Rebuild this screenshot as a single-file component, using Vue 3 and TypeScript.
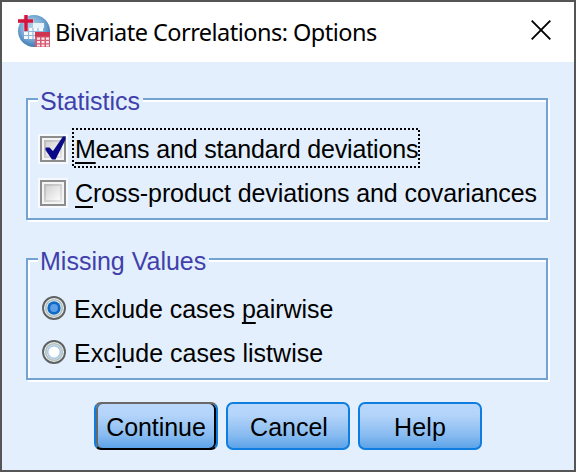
<script setup lang="ts">
import { ref } from 'vue'

interface Option {
  id: string
  before: string
  key: string
  after: string
}

const statistics: Option[] = [
  { id: 'means', before: '', key: 'M', after: 'eans and standard deviations' },
  { id: 'cross', before: '', key: 'C', after: 'ross-product deviations and covariances' },
]
const missing: Option[] = [
  { id: 'pairwise', before: 'Exclude cases ', key: 'p', after: 'airwise' },
  { id: 'listwise', before: 'Exc', key: 'l', after: 'ude cases listwise' },
]
const buttons: string[] = ['Continue', 'Cancel', 'Help']

const checked = ref<string[]>(['means'])
const focused = ref('means')
const selected = ref('pairwise')

function toggle(id: string) {
  focused.value = id
  checked.value = checked.value.includes(id)
    ? checked.value.filter((c) => c !== id)
    : [...checked.value, id]
}
</script>

<template>
  <div class="dialog">
    <header class="titlebar">
      <svg class="app-icon" width="32" height="32" viewBox="0 0 32 32">
        <defs>
          <radialGradient id="globe" cx="0.45" cy="0.4" r="0.6">
            <stop offset="0" stop-color="#b4d2ea" />
            <stop offset="0.6" stop-color="#7aabd5" />
            <stop offset="1" stop-color="#3b78b2" />
          </radialGradient>
        </defs>
        <circle cx="16" cy="16" r="16" fill="url(#globe)" />
        <path d="M6 13h19v11H6z" fill="#f4f9fd" />
        <path d="M15 8h11v5H15z" fill="#e8f2fa" />
        <path d="M6 16.500h19M6 20.500h19M10.500 13v11M15 13v11M20 13v11" stroke="#8fb5d9" stroke-width="1.100" />
        <path d="M0 6h16M8 0v17" stroke="#f0d0dc" stroke-width="5" opacity="0.400" />
        <path d="M0 6h15M8 0v16" stroke="#d3143c" stroke-width="3.400" />
        <path d="M17 17h15v15H17z" fill="#d35a70" />
        <path d="M17 17h15v4.500H17z" fill="#cf3550" />
        <path d="M19 22.500h3v2.200h-3zM23.500 22.500h3v2.200h-3zM28 22.500h3v2.200h-3zM19 26h3v2.200h-3zM23.500 26h3v2.200h-3zM28 26h3v2.200h-3zM19 29.500h3v2h-3zM23.500 29.500h3v2h-3zM28 29.500h3v2h-3z" fill="#fbe6ea" />
      </svg>
      <h1 class="title">Bivariate Correlations: Options</h1>
      <svg class="close" width="20" height="20" viewBox="0 0 20 20">
        <path d="M0.700 0.700L19.300 19.300M19.300 0.700L0.700 19.300" stroke="#000" stroke-width="1.900" />
      </svg>
    </header>

    <main class="content">
      <section class="group">
        <h2 class="legend">Statistics</h2>
        <div v-for="o in statistics" :key="o.id" class="option" @click="toggle(o.id)">
          <span class="checkbox">
            <svg v-if="checked.includes(o.id)" class="tick" width="22" height="24" viewBox="0 0 22 24">
              <path d="M0.500 11.500H4.500L8 15L18 0.500H20.500V3.500L10.500 23.500H7L0.500 14Z" fill="#0b0b88" />
            </svg>
          </span>
          <span class="label" :class="o.id">
            <svg v-if="focused === o.id" class="focus" width="348" height="40">
              <rect x="1" y="1" width="346" height="38" />
            </svg>{{ o.before }}<u>{{ o.key }}</u>{{ o.after }}</span>
        </div>
      </section>

      <section class="group">
        <h2 class="legend">Missing Values</h2>
        <div v-for="o in missing" :key="o.id" class="option" @click="selected = o.id">
          <svg class="radio" width="26" height="26" viewBox="0 0 26 26">
            <circle cx="13" cy="13" r="11" fill="#e8f0f0" stroke="#5f6163" stroke-width="1.900" />
            <circle cx="13" cy="13" r="8.300" fill="none" stroke="#b4c0be" stroke-width="1.600" />
            <template v-if="selected === o.id">
              <circle cx="13" cy="13" r="6.700" fill="#0f6ac6" />
              <circle cx="13" cy="13" r="3.900" fill="#5c9fe6" />
            </template>
            <circle v-else cx="13" cy="13" r="6.300" fill="#fff" stroke="#a5c7e8" stroke-width="1.500" />
          </svg>
          <span class="label" :class="o.id">{{ o.before }}<u>{{ o.key }}</u>{{ o.after }}</span>
        </div>
      </section>

      <footer class="actions">
        <button v-for="(b, i) in buttons" :key="b" type="button" class="button" :class="[b.toLowerCase(), { primary: i === 0 }]">
          {{ b }}
        </button>
      </footer>
    </main>
  </div>
</template>

<style>
body {
  margin: 0;
}
</style>

<style scoped>
.dialog {
  box-sizing: border-box;
  width: 576px;
  height: 472px;
  border: 2px solid #555;
  background: #e3effc;
  font-family: 'Liberation Sans', Arial, sans-serif;
  font-size: 25px;
  color: #000;
  overflow: hidden;
}
.titlebar {
  display: flex;
  align-items: center;
  box-sizing: border-box;
  height: 60px;
  padding: 0 23px 3px 16px;
  background: #fff;
}
.app-icon {
  flex: none;
}
.title {
  margin: 0 auto 0 5px;
  font: 400 23.5px/32px 'Noto Sans', 'Open Sans', sans-serif;
  letter-spacing: -0.53px;
  white-space: nowrap;
  padding-top: 3px;
}
.close {
  flex: none;
  margin-bottom: 1px;
}
.content {
  display: flex;
  flex-direction: column;
  padding: 36px 26px 0 24px;
}
.group {
  box-sizing: border-box;
  height: 122px;
  margin-bottom: 38px;
  border: 2px solid #73a3d4;
  box-shadow: inset 2px 2px #fff, 2px 2px #fff;
  padding-left: 10px;
}
.legend {
  width: max-content;
  height: 30px;
  margin: -14px 0 0;
  padding: 0 3px 0 2px;
  background: #e3effc;
  font-size: 25px;
  font-weight: 400;
  line-height: 30px;
  color: #413fac;
}
.option {
  display: flex;
  align-items: center;
  height: 44px;
}
.legend + .option {
  margin-top: 11px;
}
.checkbox {
  position: relative;
  flex: none;
  box-sizing: border-box;
  width: 26px;
  height: 26px;
  margin: 0 9px 0 2px;
  border: 2px solid #8d8d8d;
  background:
    linear-gradient(135deg, #d2d2d2, #fbfbfb) center / 14px 14px no-repeat,
    linear-gradient(135deg, #b9b9b9, #e6e6e6) center / 18px 18px no-repeat #f4f4f4;
  box-shadow: 0 0 0 2px #f6faff;
}
.tick {
  position: absolute;
  left: 3px;
  top: -2px;
}
.radio {
  flex: none;
  margin: 0 7px 0 3px;
  position: relative;
  top: -1px;
}
.label {
  position: relative;
  line-height: 30px;
  white-space: nowrap;
}
.label u {
  text-decoration: underline;
  text-decoration-thickness: 2px;
  text-underline-offset: 4px;
  text-decoration-skip-ink: none;
}
.focus {
  position: absolute;
  left: -3px;
  top: -6px;
}
.focus rect {
  fill: none;
  stroke: #000;
  stroke-width: 2;
  stroke-dasharray: 2 2;
  stroke-dashoffset: 1;
}
.means {
  letter-spacing: -0.14px;
}
.cross {
  letter-spacing: -0.09px;
}
.pairwise {
  letter-spacing: -0.02px;
}
.listwise {
  letter-spacing: 0.02px;
}
.actions {
  display: flex;
  gap: 8px;
  margin: -16px 0 0 68px;
}
.button {
  box-sizing: border-box;
  width: 124px;
  height: 48px;
  padding: 3px 0 0;
  border: 2px solid #0d7de0;
  border-radius: 7px;
  background: linear-gradient(#bad7fb 0%, #b4d4fa 25%, #86baf0 72%, #5ba3e8 100%);
  font: inherit;
  color: #000;
}
.button.primary {
  border-color: #686868 #0d7de0 #000 #0d7de0;
  box-shadow: inset 2px 0 #686868, inset -2px 0 #000;
}
.button.continue {
  letter-spacing: -0.05px;
}
.button.cancel {
  padding-left: 2px;
}
.button.help {
  letter-spacing: 0.2px;
}
</style>
